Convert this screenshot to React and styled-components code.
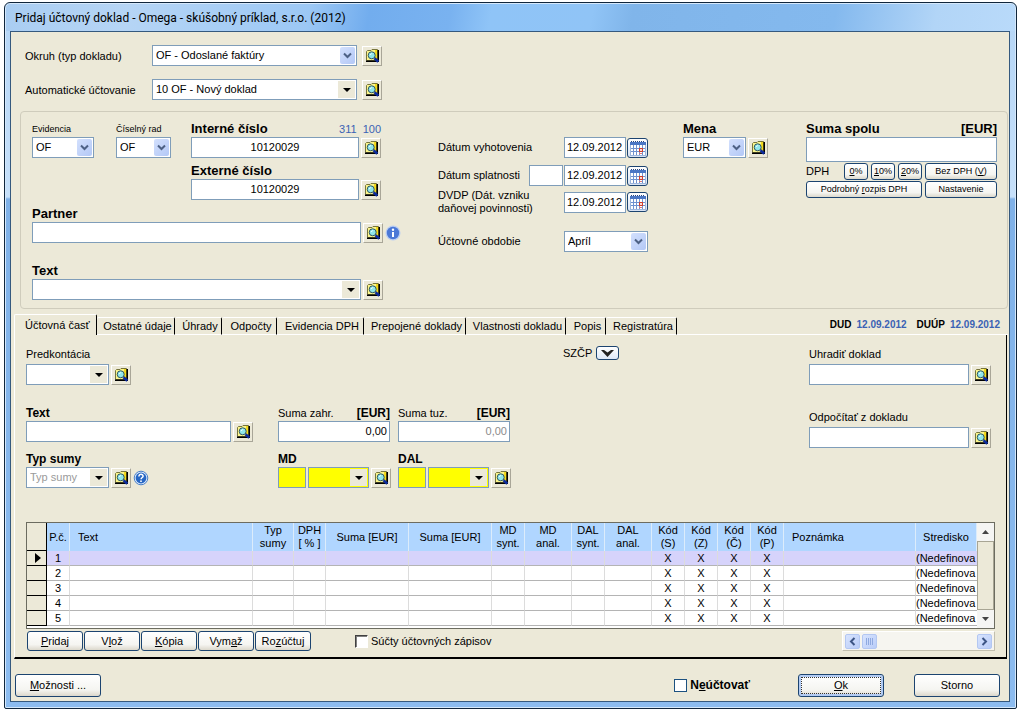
import React from "react";
import styled, { createGlobalStyle, css } from "styled-components";

const GlobalStyle = createGlobalStyle`
  *, *::before, *::after { box-sizing: border-box; }
  html, body, #root { height: 100%; }
  body {
    margin: 0;
    background: #fff;
    color: #000;
    font: 11px/13px "Liberation Sans", Arial, sans-serif;
  }
  button, input, select { font: inherit; color: inherit; margin: 0; }
`;

/* ---------- window ---------- */

const Page = styled.div`
  min-height: 100%;
  padding: 2px 2px 2px 4px;
  display: flex;
`;

const Window = styled.main`
  flex: 1;
  min-width: 0;
  display: flex;
  flex-direction: column;
  padding: 0 6px 6px 5px;
  border: 1px solid #10263c;
  border-radius: 6px 6px 2px 2px;
  background: linear-gradient(180deg, #b4d5f6 0, #c6e0fa 194px, #7fb1e8 196px, #8cbcf0 100%);
  box-shadow: inset 0 0 0 1px #d5e8fb;
`;

const TitleBar = styled.header`
  height: 27px;
  margin: 1px -5px 0 -4px;
  padding: 0 5px;
  display: flex;
  align-items: center;
  border-radius: 5px 5px 0 0;
  background: linear-gradient(100deg, #a9cdf2 0, #b6d5f5 12%, #9cc8f5 30%, #72adee 36%, #79b2f0 44%, #8fc4f7 48%, #90c4f6 58%, #80b5ea 62%, #84b9ee 82%, #b2d5f7 92%, #b9dafa 100%);
`;

const Title = styled.h1`
  margin: 0;
  padding: 0 4px;
  font: 12px/16px Roboto, "Noto Sans", sans-serif;
  white-space: nowrap;
`;

const Client = styled.form`
  flex: 1;
  display: flex;
  flex-direction: column;
  padding: 13px 1px 4px 3px;
  border: 1px solid #35597e;
  background: #ece9d8;
`;

/* ---------- shared controls ---------- */

const Caption = styled.label`
  display: block;
  margin-bottom: ${(p) => p.$after || 0}px;
  line-height: 16px;
  white-space: nowrap;
  font-size: ${(p) => p.$size || 11}px;
  font-weight: ${(p) => (p.$bold ? 700 : 400)};
`;

const CaptionRow = styled.div`
  display: flex;
  justify-content: space-between;
`;

const Accent = styled.span`
  line-height: 16px;
  color: #3a62b4;
  display: flex;
  gap: 6px;
`;

const Line = styled.div`
  display: flex;
  align-items: center;
  gap: ${(p) => (p.$gap === undefined ? 2 : p.$gap)}px;
`;

const Input = styled.input`
  flex: ${(p) => (p.$w ? "none" : "1")};
  width: ${(p) => (p.$w ? `${p.$w}px` : "auto")};
  min-width: 0;
  height: ${(p) => p.$h || 21}px;
  padding: 0 2px 1px;
  border: 1px solid #7f9db9;
  border-radius: 0;
  outline: 0;
  background: ${(p) => (p.$yellow ? "#ff0" : "#fff")};
  color: ${(p) => (p.$muted ? "#8c8c8c" : "#000")};
  text-align: ${(p) => p.$align || "left"};
`;

const SelectBox = styled.div`
  position: relative;
  flex: ${(p) => (p.$w ? "none" : "1")};
  width: ${(p) => (p.$w ? `${p.$w}px` : "auto")};
  height: 21px;
`;

const NativeSelect = styled.select`
  appearance: none;
  width: 100%;
  height: 21px;
  padding: 0 18px 1px 3px;
  border: 1px solid #7f9db9;
  border-radius: 0;
  outline: 0;
  background: ${(p) => (p.$yellow ? "#ff0" : "#fff")};
  color: ${(p) => (p.$muted ? "#9a9a9a" : "#000")};
`;

const Arrow = styled.span`
  position: absolute;
  top: 2px;
  right: 2px;
  width: ${(p) => (p.$flat ? 17 : 15)}px;
  height: 17px;
  display: flex;
  align-items: center;
  justify-content: center;
  pointer-events: none;
  ${(p) =>
    p.$flat
      ? css`background: #ece9d8;`
      : css`
          border-radius: 2px;
          background: linear-gradient(135deg, #d3e0fd, #b3c8f6);
        `}
`;

const LookupButton = styled.button`
  flex: none;
  width: 20px;
  height: 20px;
  padding: 0;
  display: flex;
  align-items: center;
  justify-content: center;
  border: 1px solid;
  border-color: #fff #a9a698 #a9a698 #fff;
  background: #ece9d8;
`;

const DateButton = styled.button`
  flex: none;
  width: 21px;
  height: 20px;
  padding: 0;
  display: flex;
  align-items: center;
  justify-content: center;
  border: 1px solid #1c4470;
  border-radius: 3px;
  background: linear-gradient(#fff, #d7e2f3);
`;

const IconButton = styled.button`
  flex: none;
  width: 16px;
  height: 16px;
  padding: 0;
  border: 0;
  background: none;
  display: flex;
`;

const Button = styled.button`
  flex: ${(p) => (p.$grow ? "1" : "none")};
  width: ${(p) => (p.$w ? `${p.$w}px` : "auto")};
  height: ${(p) => p.$h || 20}px;
  padding: 0;
  border: 1px solid #1c4470;
  border-radius: 3px;
  background: linear-gradient(#fff, #f5f5f1 70%, #dcd8cc);
  font-size: ${(p) => p.$size || 11}px;
  white-space: nowrap;
  ${(p) =>
    p.$focused &&
    css`
      box-shadow: inset 0 0 0 2px #b2cbf3;
      outline: 1px dotted #333;
      outline-offset: -4px;
    `}
`;

/* ---------- header fields ---------- */

const TopFields = styled.section`
  display: grid;
  grid-template-columns: 127px 230px;
  row-gap: 13px;
  align-items: center;
  padding-left: 11px;
`;

const GroupBox = styled.section`
  display: flex;
  margin: 11px 0 0 6px;
  padding: 9px 10px 8px 11px;
  border: 1px solid #cfccbc;
  border-radius: 4px;
`;

const NumbersColumn = styled.div`
  flex: none;
  width: 370px;
  margin-right: 36px;
`;

const NumbersGrid = styled.div`
  display: grid;
  grid-template-columns: 84px 75px 190px;
  row-gap: 5px;
  margin-bottom: ${(p) => p.$after}px;
`;

const LastCell = styled.div`
  grid-column: 3;
`;

const Block = styled.div`
  margin-bottom: ${(p) => p.$after || 0}px;
`;

const DatesColumn = styled.div`
  flex: none;
  width: 210px;
  margin: 16px 35px 0 0;
`;

const DateRow = styled.div`
  display: flex;
  align-items: center;
  gap: 1px;
  min-height: 21px;
  margin-bottom: ${(p) => p.$after || 0}px;
`;

const DateCaption = styled.label`
  flex: 1;
  white-space: nowrap;
`;

const TotalColumn = styled.div`
  flex: none;
  width: 191px;
  margin-left: auto;
`;

const VatRow = styled.div`
  display: flex;
  align-items: center;
  gap: 3px;
  margin-top: ${(p) => p.$top}px;
`;

const VatLabel = styled.span`
  flex: 1;
`;

/* ---------- tabs ---------- */

const TabStrip = styled.nav`
  display: flex;
  align-items: flex-end;
  margin-top: 5px;
`;

const Tab = styled.button`
  height: ${(p) => (p.$active ? 21 : 18)}px;
  width: ${(p) => p.$w}px;
  padding: ${(p) => (p.$active ? "0 0 0 10px" : "0 0 0 4px")};
  text-align: ${(p) => (p.$active ? "left" : "center")};
  white-space: nowrap;
  background: #ece9d8;
  border: 0 solid;
  border-color: #fff #000 #fff #fff;
  border-width: ${(p) => (p.$active ? "1px 1px 0 1px" : "1px 1px 1px 0")};
  border-radius: 2px 2px 0 0;
`;

const TabDates = styled.div`
  flex: 1;
  height: 21px;
  display: flex;
  justify-content: flex-end;
  align-items: center;
  gap: 10px;
  padding-right: 8px;
  border-bottom: 1px solid #fff;
  font-size: 10px;
  font-weight: 700;
`;

const StampText = styled.span`
  white-space: nowrap;
`;

const Stamp = styled.span`
  margin-left: 5px;
  color: #3a62b4;
`;

const Panel = styled.section`
  flex: 1;
  display: flex;
  flex-direction: column;
  margin-right: 1px;
  padding: 11px 11px 5px 11px;
  border: solid;
  border-width: 0 1px 2px 1px;
  border-color: #000 #000 #000 #fff;
`;

const PanelFields = styled.div`
  display: flex;
  margin-bottom: 34px;
  padding-right: 4px;
`;

const EntryGrid = styled.div`
  flex: none;
  display: grid;
  grid-template-columns: 252px 120px 165px;
  grid-template-rows: 59px 46px 37px;
`;

const FullCell = styled.div`
  grid-column: 1 / -1;
`;

const Fixed = styled.div`
  width: ${(p) => p.$w}px;
`;

const DropButton = styled.button`
  width: 23px;
  height: 14px;
  padding: 0;
  display: flex;
  align-items: center;
  justify-content: center;
  border: 1px solid #1c4470;
  border-radius: 3px;
  background: linear-gradient(#fff, #dde8f8);
`;

const Szcp = styled.div`
  display: flex;
  gap: 4px;
  height: 14px;
  line-height: 14px;
`;

const LinksColumn = styled.div`
  width: 182px;
  margin-left: auto;
`;

/* ---------- grid ---------- */

const GridFrame = styled.div`
  display: flex;
  height: 107px;
  border: 1px solid #6c6c60;
  background: #fff;
`;

const GridScroll = styled.div`
  flex: 1;
  min-width: 0;
`;

const Table = styled.table`
  width: 100%;
  table-layout: fixed;
  border-collapse: separate;
  border-spacing: 0;
`;

const HeadCell = styled.th`
  height: 28px;
  padding: 0 0 0 ${(p) => (p.$left ? 8 : 0)}px;
  border-right: 1px solid #dcecfb;
  background: #b0d6ff;
  font-weight: 400;
  text-align: ${(p) => (p.$left ? "left" : "center")};
  white-space: pre-line;
`;

const CornerCell = styled.td`
  border-right: 1px solid #000;
  border-bottom: 1px solid #000;
  background: #ece9d8;
`;

const MarkerCell = styled.th`
  height: 15px;
  padding: 0 0 0 7px;
  border-right: 1px solid #000;
  border-bottom: 1px solid #000;
  background: #ece9d8;
  line-height: 0;
  text-align: left;
`;

const Cell = styled.td`
  height: 15px;
  padding: 0;
  border-right: ${(p) => (p.$left ? 0 : 1)}px solid #dcdcdc;
  border-bottom: 1px solid #b4b4b4;
  background: ${(p) => (p.$selected ? "#d6d3fb" : "#fff")};
  line-height: 14px;
  text-align: ${(p) => (p.$left ? "left" : "center")};
  white-space: nowrap;
`;

const VScroll = styled.div`
  flex: none;
  width: 17px;
  display: flex;
  flex-direction: column;
`;

const VScrollButton = styled.button`
  height: 18px;
  padding: 0;
  border: 0;
  background: #f5f5f3;
  display: flex;
  align-items: center;
  justify-content: center;
`;

const VScrollThumb = styled.div`
  flex: 1;
  border: 1px solid #a8a594;
  background: #ece9d8;
`;

const ActionRow = styled.div`
  display: flex;
  align-items: center;
  gap: 1px;
  margin-top: 2px;
  padding-left: 1px;
`;

const CheckLabel = styled.label`
  display: flex;
  align-items: center;
  gap: 3px;
  font-size: ${(p) => (p.$bold ? 12 : 11)}px;
  font-weight: ${(p) => (p.$bold ? 700 : 400)};
  white-space: nowrap;
`;

const SumsSlot = styled.div`
  flex: 1;
  padding-left: 43px;
`;

const CheckBox = styled.input`
  appearance: none;
  width: 13px;
  height: 13px;
  background: #fff;
  ${(p) =>
    p.$sunken
      ? css`
          border: 1px solid;
          border-color: #404040 #fff #fff #404040;
          box-shadow: inset 1px 1px 0 #808080;
        `
      : css`border: 1px solid #1c5180;`}
`;

const HScroll = styled.div`
  width: 153px;
  height: 20px;
  padding: 0 2px;
  display: flex;
  align-items: center;
  gap: 2px;
  border: 1px solid;
  border-color: #fff #c2bfae #c2bfae #fff;
  background: #f6f5f0;
`;

const HScrollButton = styled.button`
  width: 15px;
  height: 15px;
  padding: 0;
  display: flex;
  align-items: center;
  justify-content: center;
  border: 1px solid #b3c7f2;
  border-radius: 2px;
  background: linear-gradient(135deg, #d8e4fe, #b9ccf8);
`;

const HScrollTrack = styled.div`
  flex: 1;
`;

const Footer = styled.footer`
  display: flex;
  align-items: center;
  margin-top: 15px;
  padding: 0 8px 0 1px;
`;

const NoPosting = styled.div`
  margin: 0 48px 0 auto;
`;

const Spacer = styled.div`
  width: 30px;
`;

/* ---------- icons ---------- */

const LookupIcon = () => (
  <svg width="15" height="15" viewBox="0 0 15 15" aria-hidden="true">
    <path d="M1.500 3.500l1-1h3.500l1-1h5.500v11h-11z" fill="#fbf58c" stroke="#77753c" />
    <path d="M10 2h2.500v9H10z" fill="#f2d91c" />
    <path d="M1 13.200h12M13.200 2v12" stroke="#000" strokeWidth="1.600" fill="none" />
    <circle cx="6.700" cy="7.300" r="3.500" fill="#8fe6ea" stroke="#2d5560" />
    <path d="M5.200 7l1.700-1.700" stroke="#fff" />
    <path d="M9.500 10.200l3.800 3.600" stroke="#0b2a9c" strokeWidth="2.600" />
  </svg>
);

const CalendarIcon = () => (
  <svg width="16" height="16" viewBox="0 0 16 16" aria-hidden="true">
    <rect x="0.500" y="2.500" width="15" height="13" fill="#fff" stroke="#9db6dd" />
    <path d="M0 3.500h16" stroke="#4a76c4" strokeWidth="3" />
    <path d="M1 1.500h14" stroke="#27457f" strokeWidth="1" strokeDasharray="1 1" />
    <path d="M1 8.500h14M1 11.500h14M3.500 5v10M6.500 5v10M9.500 5v10M12.500 5v10" stroke="#6f92cf" />
    <rect x="9.500" y="8.500" width="3" height="3" fill="#fbd9d4" stroke="#d0402e" />
    <path d="M9 13.500h3" stroke="#d77" />
  </svg>
);

const InfoIcon = () => (
  <svg width="16" height="16" viewBox="0 0 16 16" aria-hidden="true">
    <circle cx="8" cy="8" r="7.500" fill="#b9cdf2" />
    <circle cx="8" cy="8" r="6.200" fill="#4b78d6" />
    <circle cx="8" cy="4.700" r="1.200" fill="#fff" />
    <path d="M8 7v5" stroke="#fff" strokeWidth="2" fill="none" />
  </svg>
);

const HelpIcon = () => (
  <svg width="16" height="16" viewBox="0 0 16 16" aria-hidden="true">
    <circle cx="8" cy="8" r="6.800" fill="#dbe9fb" stroke="#4a80c8" />
    <circle cx="8" cy="8" r="5.400" fill="#2767c4" />
    <path d="M5.900 6.400c0-2.800 4.300-2.600 4.200-.200-.1 1.300-1.900 1.300-2 3" stroke="#fff" strokeWidth="1.500" fill="none" />
    <circle cx="8" cy="11.200" r="0.900" fill="#fff" />
  </svg>
);

const Chevron = () => (
  <svg width="9" height="7" viewBox="0 0 9 7" aria-hidden="true">
    <path d="M1 1.500l3.500 3.500L8 1.500" stroke="#4d6185" strokeWidth="2" fill="none" />
  </svg>
);

const Triangle = ({ up, small }) => (
  <svg width={small ? 7 : 8} height="4" viewBox="0 0 8 4" preserveAspectRatio="none" aria-hidden="true">
    <path d={up ? "M0 4h8L4 0z" : "M0 0h8L4 4z"} fill={small ? "#444" : "#000"} />
  </svg>
);

/* ---------- composed parts ---------- */

const Lookup = () => (
  <LookupButton type="button" aria-label="Vyhľadať">
    <LookupIcon />
  </LookupButton>
);

const Select = ({ id, value = "", w, flat, yellow, muted, label }) => (
  <SelectBox $w={w}>
    <NativeSelect id={id} aria-label={label} $yellow={yellow} $muted={muted} defaultValue={value}>
      <option>{value}</option>
    </NativeSelect>
    <Arrow $flat={flat}>{flat ? <Triangle /> : <Chevron />}</Arrow>
  </SelectBox>
);

const tabs = [
  ["Účtovná časť", 83],
  ["Ostatné údaje", 78],
  ["Úhrady", 47],
  ["Odpočty", 55],
  ["Evidencia DPH", 87],
  ["Prepojené doklady", 102],
  ["Vlastnosti dokladu", 100],
  ["Popis", 40],
  ["Registratúra", 71],
];

const columns = [
  { title: "P.č.", w: 23 },
  { title: "Text", left: true },
  { title: "Typ\nsumy", w: 41 },
  { title: "DPH\n[ % ]", w: 32 },
  { title: "Suma [EUR]", w: 83 },
  { title: "Suma [EUR]", w: 83 },
  { title: "MD\nsynt.", w: 33 },
  { title: "MD\nanal.", w: 47 },
  { title: "DAL\nsynt.", w: 33 },
  { title: "DAL\nanal.", w: 47 },
  { title: "Kód\n(S)", w: 33 },
  { title: "Kód\n(Z)", w: 33 },
  { title: "Kód\n(Č)", w: 33 },
  { title: "Kód\n(P)", w: 33 },
  { title: "Poznámka", w: 132, left: true },
  { title: "Stredisko", w: 61 },
];

const cellValue = (title, row) => {
  if (title === "P.č.") return row;
  if (title.startsWith("Kód")) return "X";
  if (title === "Stredisko") return "(Nedefinova";
  return "";
};

const EntriesTable = () => (
  <GridFrame>
    <GridScroll>
      <Table>
        <colgroup>
          <col width="20" />
          {columns.map((c, i) => (
            <col key={i} width={c.w} />
          ))}
        </colgroup>
        <thead>
          <tr>
            <CornerCell />
            {columns.map((c, i) => (
              <HeadCell key={i} scope="col" $left={c.left}>
                {c.title}
              </HeadCell>
            ))}
          </tr>
        </thead>
        <tbody>
          {[1, 2, 3, 4, 5].map((row) => (
            <tr key={row}>
              <MarkerCell scope="row" aria-label={`Riadok ${row}`}>
                {row === 1 && (
                  <svg width="7" height="10" viewBox="0 0 7 10" aria-hidden="true">
                    <path d="M1 0l6 5-6 5z" />
                  </svg>
                )}
              </MarkerCell>
              {columns.map((c, i) => (
                <Cell key={i} $selected={row === 1} $left={c.title === "Stredisko"}>
                  {cellValue(c.title, row)}
                </Cell>
              ))}
            </tr>
          ))}
        </tbody>
      </Table>
    </GridScroll>
    <VScroll>
      <VScrollButton type="button" aria-label="Nahor">
        <Triangle up small />
      </VScrollButton>
      <VScrollThumb />
      <VScrollButton type="button" aria-label="Nadol">
        <Triangle small />
      </VScrollButton>
    </VScroll>
  </GridFrame>
);

const Account = ({ title }) => (
  <div>
    <Caption htmlFor={`synt-${title}`} $bold $size={12}>{title}</Caption>
    <Line>
      <Input id={`synt-${title}`} $w={28} $yellow />
      <Select label={`${title} analytický`} w={61} flat yellow />
      <Lookup />
    </Line>
  </div>
);

const Amount = ({ id, title, muted }) => (
  <Fixed $w={112}>
    <CaptionRow>
      <Caption htmlFor={id}>{title}</Caption>
      <Caption as="span" $bold $size={12}>[EUR]</Caption>
    </CaptionRow>
    <Line>
      <Input id={id} defaultValue="0,00" $align="right" $muted={muted} />
    </Line>
  </Fixed>
);

const DateField = ({ id }) => (
  <>
    <Input id={id} $w={62} defaultValue="12.09.2012" />
    <DateButton type="button" aria-label="Kalendár">
      <CalendarIcon />
    </DateButton>
  </>
);

export default function App() {
  return (
    <Page>
      <GlobalStyle />
      <Window>
        <TitleBar>
          <Title>Pridaj účtovný doklad - Omega - skúšobný príklad, s.r.o. (2012)</Title>
        </TitleBar>
        <Client onSubmit={(e) => e.preventDefault()}>
          <TopFields>
            <Caption htmlFor="okruh">Okruh (typ dokladu)</Caption>
            <Line $gap={5}>
              <Select id="okruh" value="OF - Odoslané faktúry" w={205} />
              <Lookup />
            </Line>
            <Caption htmlFor="auto">Automatické účtovanie</Caption>
            <Line $gap={5}>
              <Select id="auto" value="10 OF - Nový doklad" w={205} flat />
              <Lookup />
            </Line>
          </TopFields>

          <GroupBox>
            <NumbersColumn>
              <NumbersGrid $after={6}>
                <div>
                  <Caption htmlFor="evid" $size={9}>Evidencia</Caption>
                  <Select id="evid" value="OF" w={62} />
                </div>
                <div>
                  <Caption htmlFor="rad" $size={9}>Číselný rad</Caption>
                  <Select id="rad" value="OF" w={55} />
                </div>
                <div>
                  <CaptionRow>
                    <Caption htmlFor="interne" $bold $size={13}>Interné číslo</Caption>
                    <Accent><span>311</span><span>100</span></Accent>
                  </CaptionRow>
                  <Line>
                    <Input id="interne" defaultValue="10120029" $align="center" />
                    <Lookup />
                  </Line>
                </div>
                <LastCell>
                  <Caption htmlFor="externe" $bold $size={13}>Externé číslo</Caption>
                  <Line>
                    <Input id="externe" defaultValue="10120029" $align="center" />
                    <Lookup />
                  </Line>
                </LastCell>
              </NumbersGrid>
              <Block $after={20}>
                <Caption htmlFor="partner" $bold $size={13}>Partner</Caption>
                <Line>
                  <Input id="partner" $w={329} />
                  <Lookup />
                  <IconButton type="button" aria-label="Informácie"><InfoIcon /></IconButton>
                </Line>
              </Block>
              <Block>
                <Caption htmlFor="text" $bold $size={13}>Text</Caption>
                <Line>
                  <Select id="text" w={329} flat />
                  <Lookup />
                </Line>
              </Block>
            </NumbersColumn>

            <DatesColumn>
              <DateRow $after={7}>
                <DateCaption htmlFor="vyhot">Dátum vyhotovenia</DateCaption>
                <DateField id="vyhot" />
              </DateRow>
              <DateRow $after={3}>
                <DateCaption htmlFor="splat">Dátum splatnosti</DateCaption>
                <Input $w={34} aria-label="Počet dní splatnosti" />
                <DateField id="splat" />
              </DateRow>
              <DateRow $after={16}>
                <DateCaption htmlFor="dvdp">DVDP (Dát. vzniku<br />daňovej povinnosti)</DateCaption>
                <DateField id="dvdp" />
              </DateRow>
              <DateRow>
                <DateCaption htmlFor="obdobie">Účtovné obdobie</DateCaption>
                <Select id="obdobie" value="Apríl" w={84} />
              </DateRow>
            </DatesColumn>

            <Block>
              <Caption htmlFor="mena" $bold $size={13}>Mena</Caption>
              <Line>
                <Select id="mena" value="EUR" w={63} />
                <Lookup />
              </Line>
            </Block>

            <TotalColumn>
              <CaptionRow>
                <Caption htmlFor="suma" $bold $size={13}>Suma spolu</Caption>
                <Caption as="span" $bold $size={13}>[EUR]</Caption>
              </CaptionRow>
              <Line>
                <Input id="suma" $h={25} />
              </Line>
              <VatRow $top={1}>
                <VatLabel>DPH</VatLabel>
                <Button type="button" $w={24} $h={17} $size={9}><u>0</u>%</Button>
                <Button type="button" $w={24} $h={17} $size={9}><u>1</u>0%</Button>
                <Button type="button" $w={24} $h={17} $size={9}><u>2</u>0%</Button>
                <Button type="button" $w={72} $h={17} $size={9}>Bez DPH (<u>V</u>)</Button>
              </VatRow>
              <VatRow $top={1}>
                <Button type="button" $grow $h={17} $size={9}>Podrobný <u>r</u>ozpis DPH</Button>
                <Button type="button" $w={72} $h={17} $size={9}>Nastavenie</Button>
              </VatRow>
            </TotalColumn>
          </GroupBox>

          <TabStrip role="tablist">
            {tabs.map(([name, w], i) => (
              <Tab key={name} type="button" role="tab" aria-selected={i === 0} $active={i === 0} $w={w}>
                {name}
              </Tab>
            ))}
            <TabDates>
              <StampText>DUD<Stamp>12.09.2012</Stamp></StampText>
              <StampText>DUÚP<Stamp>12.09.2012</Stamp></StampText>
            </TabDates>
          </TabStrip>

          <Panel>
            <PanelFields>
              <EntryGrid>
                <FullCell>
                  <Caption htmlFor="predk" $after={2}>Predkontácia</Caption>
                  <Line>
                    <Select id="predk" w={83} flat />
                    <Lookup />
                  </Line>
                </FullCell>
                <div>
                  <Caption htmlFor="text2" $bold $size={12}>Text</Caption>
                  <Line>
                    <Input id="text2" $w={205} />
                    <Lookup />
                  </Line>
                </div>
                <Amount id="zahr" title="Suma zahr." />
                <Amount id="tuz" title="Suma tuz." muted />
                <div>
                  <Caption htmlFor="typ" $bold $size={12}>Typ sumy</Caption>
                  <Line>
                    <Select id="typ" value="Typ sumy" w={83} flat muted />
                    <Lookup />
                    <IconButton type="button" aria-label="Pomoc"><HelpIcon /></IconButton>
                  </Line>
                </div>
                <Account title="MD" />
                <Account title="DAL" />
              </EntryGrid>
              <Szcp>
                <span>SZČP</span>
                <DropButton type="button" aria-label="SZČP">
                  <svg width="13" height="7" viewBox="0 0 13 7" aria-hidden="true">
                    <path d="M0 0h3l3.500 2.500L10 0h3L6.500 7z" fill="#222" />
                  </svg>
                </DropButton>
              </Szcp>
              <LinksColumn>
                <Block $after={24}>
                  <Caption htmlFor="uhradit" $after={2}>Uhradiť doklad</Caption>
                  <Line>
                    <Input id="uhradit" />
                    <Lookup />
                  </Line>
                </Block>
                <Block>
                  <Caption htmlFor="odpocitat" $after={2}>Odpočítať z dokladu</Caption>
                  <Line>
                    <Input id="odpocitat" />
                    <Lookup />
                  </Line>
                </Block>
              </LinksColumn>
            </PanelFields>

            <EntriesTable />

            <ActionRow>
              <Button type="button" $w={56}><u>P</u>ridaj</Button>
              <Button type="button" $w={56}>V<u>l</u>ož</Button>
              <Button type="button" $w={56}><u>K</u>ópia</Button>
              <Button type="button" $w={56}>Vym<u>a</u>ž</Button>
              <Button type="button" $w={56}>Ro<u>z</u>účtuj</Button>
              <SumsSlot>
                <CheckLabel>
                  <CheckBox type="checkbox" $sunken />
                  Súčty účtovných zápisov
                </CheckLabel>
              </SumsSlot>
              <HScroll>
                <HScrollButton type="button" aria-label="Doľava">
                  <svg width="7" height="9" viewBox="0 0 7 9" aria-hidden="true">
                    <path d="M5.500 1L2 4.500 5.500 8" stroke="#3d5585" strokeWidth="2" fill="none" />
                  </svg>
                </HScrollButton>
                <HScrollButton type="button" aria-label="Posuvník">
                  <svg width="8" height="7" viewBox="0 0 8 7" aria-hidden="true">
                    <path d="M0.500 0v7M2.500 0v7M4.500 0v7M6.500 0v7" stroke="#8fa9e0" />
                  </svg>
                </HScrollButton>
                <HScrollTrack />
                <HScrollButton type="button" aria-label="Doprava">
                  <svg width="7" height="9" viewBox="0 0 7 9" aria-hidden="true">
                    <path d="M1.500 1L5 4.500 1.500 8" stroke="#3d5585" strokeWidth="2" fill="none" />
                  </svg>
                </HScrollButton>
              </HScroll>
            </ActionRow>
          </Panel>

          <Footer>
            <Button type="button" $w={86} $h={23}><u>M</u>ožnosti ...</Button>
            <NoPosting>
              <CheckLabel $bold>
                <CheckBox type="checkbox" />
                <span>N<u>e</u>účtovať</span>
              </CheckLabel>
            </NoPosting>
            <Button type="submit" $w={86} $h={23} $focused><u>O</u>k</Button>
            <Spacer />
            <Button type="button" $w={86} $h={23}>Storno</Button>
          </Footer>
        </Client>
      </Window>
    </Page>
  );
}
